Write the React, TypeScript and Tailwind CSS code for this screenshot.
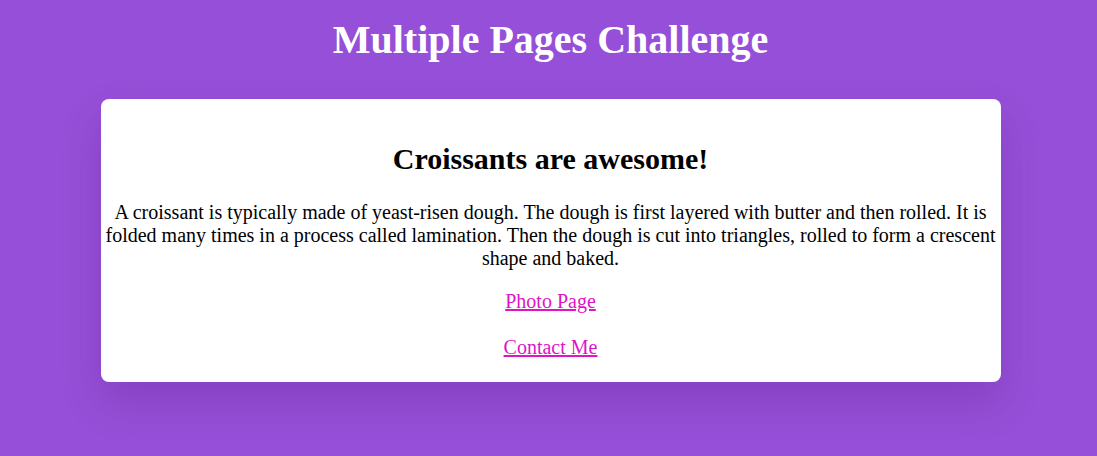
export default function App() {
  return (
    <div className="min-h-screen bg-[#964fd8] pl-[4px] pb-[75px] pt-[17px] font-['Liberation_Serif','Times_New_Roman',serif]">
      <h1 className="text-center text-[40px] leading-[46px] font-bold text-white">Multiple Pages Challenge</h1>

      <div className="mx-auto mt-[36px] w-[900px] rounded-lg bg-white px-[4px] pt-[43px] pb-[23px] text-center text-black shadow-[0_20px_40px_rgba(60,0,90,0.18)]">
        <h2 className="text-[30px] leading-[34px] font-bold">Croissants are awesome!</h2>
        <p className="mt-[25px] text-[20px] leading-[23px]">
          A croissant is typically made of yeast-risen dough. The dough is first layered with butter and then rolled. It is
          folded many times in a process called lamination. Then the dough is cut into triangles, rolled to form a crescent
          shape and baked.
        </p>
        <p className="mt-[20px] text-[20px] leading-[23px]">
          <a href="#" className="text-[#dd15c6] underline">Photo Page</a>
        </p>
        <p className="mt-[23px] text-[20px] leading-[23px]">
          <a href="#" className="text-[#dd15c6] underline">Contact Me</a>
        </p>
      </div>
    </div>
  );
}
